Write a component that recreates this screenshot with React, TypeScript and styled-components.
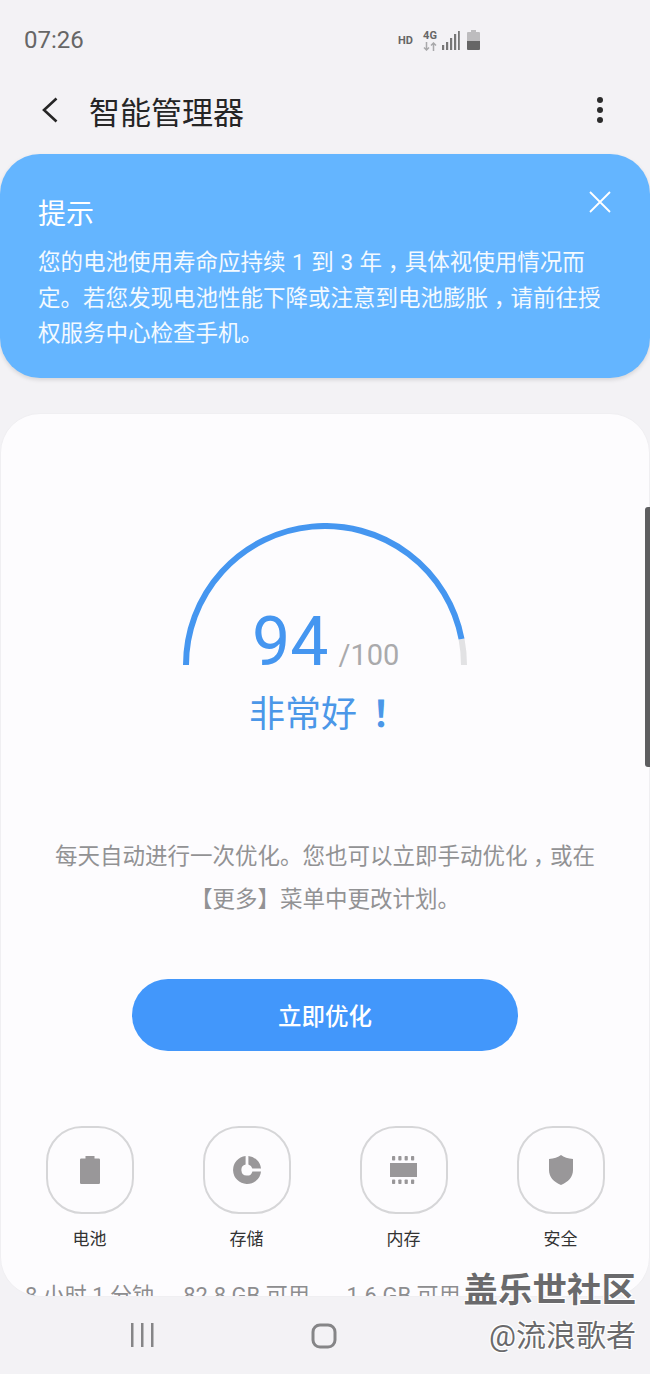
import styled, { createGlobalStyle } from 'styled-components'

const GlobalStyle = createGlobalStyle`
  html, body {
    margin: 0;
    padding: 0;
    background: #f3f2f5;
  }

  body {
    font-family: Roboto, "Noto Sans CJK SC", sans-serif;
  }
`

const tools = [
  { label: '电池', value: '8 小时 1 分钟', icon: <BatteryGlyph /> },
  { label: '存储', value: '82.8 GB 可用', icon: <StorageGlyph /> },
  { label: '内存', value: '1.6 GB 可用', icon: <ChipGlyph /> },
  { label: '安全', value: '', icon: <ShieldGlyph /> },
]

function BatteryGlyph() {
  return (
    <svg width="20" height="28" viewBox="0 0 20 28" fill="#999799">
      <path d="M5.500 0h9v2.500h4.300a1.200 1.200 0 0 1 1.200 1.200v23.100a1.200 1.200 0 0 1-1.200 1.200H1.200a1.200 1.200 0 0 1-1.200-1.200V3.700a1.200 1.200 0 0 1 1.200-1.200h4.300z" />
    </svg>
  )
}

function StorageGlyph() {
  return (
    <svg width="28" height="28" viewBox="0 0 30 30" fill="#999799">
      <path d="M13.500 0v9.200a6 6 0 1 0 7.300 7.300H30A15 15 0 1 1 13.500 0z" />
      <path d="M16.500 0A15 15 0 0 1 30 13.500h-9.300a6 6 0 0 0-4.200-4.300z" />
    </svg>
  )
}

function ChipGlyph() {
  return (
    <svg width="27" height="28" viewBox="0 0 27 28" fill="#999799">
      <rect x="0" y="7" width="27" height="14" />
      {[2, 8.300, 14.600, 21].map((x) => (
        <g key={x}>
          <rect x={x} y="0" width="3.200" height="4.500" rx="0.800" />
          <rect x={x} y="23.500" width="3.200" height="4.500" rx="0.800" />
        </g>
      ))}
    </svg>
  )
}

function ShieldGlyph() {
  return (
    <svg width="24" height="30" viewBox="0 0 25 31" fill="#999799">
      <path d="M12.500 0c2.800 2.300 7.400 3.700 12.500 4v11.500c0 7-4.800 12.500-12.500 15.500C4.800 28 0 22.500 0 15.500V4C5.100 3.700 9.700 2.300 12.500 0z" />
    </svg>
  )
}

export default function App() {
  const r = 139
  const cx = 142
  const cy = 142
  const end = Math.PI * 0.94
  const splitX = cx - r * Math.cos(end)
  const splitY = cy - r * Math.sin(end)

  return (
    <Page>
      <GlobalStyle />
      <StatusBar>
        <Clock>07:26</Clock>
        <StatusIcons>
          <HdMark>HD</HdMark>
          <NetworkMark>
            <span>4G</span>
            <svg width="14" height="9" viewBox="0 0 14 9" fill="none" stroke="#a9a9ab" strokeWidth="1.500">
              <path d="M3.500 0v8M1 5.500l2.500 2.500L6 5.500" />
              <path d="M10.500 9V1M8 3.500L10.500 1 13 3.500" />
            </svg>
          </NetworkMark>
          <svg width="18" height="20" viewBox="0 0 18 20" fill="#777">
            <rect x="0" y="15" width="2.200" height="5" />
            <rect x="4" y="12" width="2.200" height="8" />
            <rect x="8" y="8" width="2.200" height="12" />
            <rect x="12" y="4" width="2.200" height="16" />
            <rect x="16" y="1" width="1.800" height="19" />
          </svg>
          <svg width="13" height="20" viewBox="0 0 13 20">
            <path d="M4 0h5v2h3a1 1 0 0 1 1 1v8H0V3a1 1 0 0 1 1-1h3z" fill="#bdbcbe" />
            <path d="M0 11h13v8a1 1 0 0 1-1 1H1a1 1 0 0 1-1-1z" fill="#666" />
          </svg>
        </StatusIcons>
      </StatusBar>

      <Toolbar>
        <BackButton>
          <svg width="18" height="26" viewBox="0 0 18 26" fill="none" stroke="#252525" strokeWidth="2.600">
            <path d="M15.500 1.500L3 13l12.500 11.500" />
          </svg>
        </BackButton>
        <PageTitle>智能管理器</PageTitle>
        <MoreButton>
          <Dot />
          <Dot />
          <Dot />
        </MoreButton>
      </Toolbar>

      <Notice>
        <NoticeClose>
          <svg width="22" height="22" viewBox="0 0 22 22" fill="none" stroke="#fff" strokeWidth="1.800">
            <path d="M1 1l20 20M21 1L1 21" />
          </svg>
        </NoticeClose>
        <NoticeTitle>提示</NoticeTitle>
        <NoticeText>
          您的电池使用寿命应持续 1 到 3 年<Mark>，</Mark>具体视使用情况而定。若您发现电池性能下降或注意到电池膨胀<Mark>，</Mark>请前往授权服务中心检查手机。
        </NoticeText>
      </Notice>

      <Card>
        <Gauge>
          <svg width="284" height="142" viewBox="0 0 284 142" fill="none" strokeWidth="6">
            <path d={`M${splitX} ${splitY}A${r} ${r} 0 0 1 ${cx + r} ${cy}`} stroke="#e2e2e4" />
            <path d={`M${cx - r} ${cy}A${r} ${r} 0 0 1 ${splitX} ${splitY}`} stroke="#4596f0" />
          </svg>
          <Score>
            <ScoreValue>94</ScoreValue>
            <ScoreMax>/100</ScoreMax>
          </Score>
        </Gauge>
        <Rating>
          非常好<Mark>！</Mark>
        </Rating>
        <Description>
          每天自动进行一次优化。您也可以立即手动优化<Mark>，</Mark>或在
          <br />
          【更多】菜单中更改计划。
        </Description>
        <OptimizeButton>立即优化</OptimizeButton>
        <ToolGrid>
          {tools.map((tool) => (
            <Tool key={tool.label}>
              <ToolIcon>{tool.icon}</ToolIcon>
              <ToolLabel>{tool.label}</ToolLabel>
              <ToolValue>{tool.value}</ToolValue>
            </Tool>
          ))}
        </ToolGrid>
      </Card>

      <NavBar>
        <svg width="24" height="24" viewBox="0 0 24 24" fill="#858587">
          <rect x="1" y="0" width="2.500" height="24" />
          <rect x="11" y="0" width="2.500" height="24" />
          <rect x="21" y="0" width="2.500" height="24" />
        </svg>
        <svg width="26" height="26" viewBox="0 0 26 26" fill="none" stroke="#858587" strokeWidth="3">
          <rect x="2" y="2" width="22" height="22" rx="7" />
        </svg>
      </NavBar>

      <Scrollbar />
      <Watermark>
        <WatermarkTitle>盖乐世社区</WatermarkTitle>
        <WatermarkUser>@流浪歌者</WatermarkUser>
      </Watermark>
    </Page>
  )
}

const Page = styled.div`
  position: relative;
  width: 650px;
  height: 1374px;
  display: flex;
  flex-direction: column;
  overflow: hidden;
  background: #f3f2f5;
`

const StatusBar = styled.div`
  height: 80px;
  padding: 0 170px 0 24px;
  display: flex;
  align-items: center;
  justify-content: space-between;
  box-sizing: border-box;
`

const Clock = styled.span`
  font-size: 24px;
  color: #666;
`

const StatusIcons = styled.div`
  display: flex;
  align-items: center;
  gap: 7px;
  height: 22px;
`

const HdMark = styled.span`
  font-size: 11px;
  font-weight: 700;
  color: #666;
  margin-right: 3px;
`

const NetworkMark = styled.div`
  display: flex;
  flex-direction: column;
  align-items: center;
  gap: 1px;
  margin-right: -2px;

  span {
    font-size: 11px;
    line-height: 11px;
    font-weight: 700;
    color: #666;
  }

  svg {
    display: block;
  }
`

const Toolbar = styled.div`
  height: 60px;
  display: flex;
  align-items: center;
  padding: 0 47px 0 41px;
`

const BackButton = styled.div`
  display: flex;
  width: 48px;
`

const PageTitle = styled.h1`
  flex: 1;
  margin: 0;
  font-size: 31px;
  font-weight: 400;
  color: #252525;
`

const MoreButton = styled.div`
  display: flex;
  flex-direction: column;
  gap: 4px;
`

const Dot = styled.span`
  width: 6px;
  height: 6px;
  border-radius: 50%;
  background: #2c2c2c;
`

const Notice = styled.section`
  position: relative;
  margin-top: 14px;
  height: 224px;
  box-sizing: border-box;
  padding: 41px 38px 0;
  border-radius: 40px;
  background: #64b5ff;
  box-shadow: 0 2px 4px rgba(0, 0, 0, 0.12);
  color: #fff;
`

const NoticeClose = styled.div`
  position: absolute;
  top: 37px;
  right: 39px;
`

const NoticeTitle = styled.h2`
  margin: 0 0 10px;
  font-size: 28px;
  line-height: 40px;
  font-weight: 400;
`

const NoticeText = styled.p`
  margin: 0;
  font-size: 22.500px;
  line-height: 35.500px;
  word-spacing: 1px;
  color: #f4faff;
`

// half-width glyph padded back out to a full cell, so the mark sits in the middle
const Mark = styled.span`
  font-feature-settings: 'halt';
  padding: 0 0.25em;
`

const Card = styled.main`
  margin-top: 35px;
  flex: 1;
  min-height: 0;
  overflow: hidden;
  box-sizing: border-box;
  padding: 109px 10px 0;
  display: flex;
  flex-direction: column;
  align-items: center;
  border: 1px solid #f0eff2;
  border-radius: 40px;
  background: #fdfcfe;
`

const Gauge = styled.div`
  position: relative;
  width: 284px;
  height: 142px;

  svg {
    display: block;
  }
`

const Score = styled.div`
  position: absolute;
  left: 69px;
  bottom: -18px;
  display: flex;
  align-items: baseline;
  white-space: nowrap;
`

const ScoreValue = styled.span`
  font-size: 68px;
  line-height: 82px;
  color: #4596f0;
`

const ScoreMax = styled.span`
  margin-left: 10px;
  font-size: 29px;
  color: #aaaaac;
`

const Rating = styled.div`
  margin: 26px 8px 0 0;
  font-size: 36px;
  line-height: 48px;
  color: #4b97e8;

  ${Mark} {
    padding: 0 0.08em 0 0.42em;
    font-weight: 700;
  }
`

const Description = styled.p`
  margin: 96px 0 0;
  font-size: 22.500px;
  line-height: 43px;
  text-align: center;
  white-space: nowrap;
  color: #929294;
`

const OptimizeButton = styled.button`
  margin-top: 58px;
  flex: none;
  width: 386px;
  height: 72px;
  border: none;
  border-radius: 36px;
  background: #4297fb;
  color: #fff;
  font-family: inherit;
  font-size: 23.500px;
  font-weight: 500;
`

const ToolGrid = styled.div`
  margin-top: 75px;
  align-self: stretch;
  display: grid;
  grid-template-columns: repeat(4, 157px);
`

const Tool = styled.div`
  display: flex;
  flex-direction: column;
  align-items: center;
`

const ToolIcon = styled.div`
  width: 88px;
  height: 88px;
  box-sizing: border-box;
  display: flex;
  align-items: center;
  justify-content: center;
  border: 2px solid #d6d6d8;
  border-radius: 36px;
`

const ToolLabel = styled.div`
  margin-top: 12px;
  font-size: 17px;
  line-height: 26px;
  color: #333;
`

const ToolValue = styled.div`
  margin-top: 29px;
  font-size: 22px;
  line-height: 30px;
  white-space: nowrap;
  color: #8d8d8f;
`

const NavBar = styled.nav`
  height: 77px;
  flex: none;
  box-sizing: border-box;
  padding: 26px 0 0 130px;
  display: flex;
  align-items: flex-start;
  gap: 157px;
  background: #f3f2f5;
`

const Scrollbar = styled.div`
  position: absolute;
  top: 507px;
  right: 0;
  width: 5px;
  height: 260px;
  border-radius: 3px 0 0 3px;
  background: #5e5e60;
`

const Watermark = styled.div`
  position: absolute;
  right: 14px;
  top: 1268px;
  display: flex;
  flex-direction: column;
  align-items: flex-end;
  gap: 2px;
  color: #6a6a6c;
  text-shadow: 1px 1px 0 #fff, -1px -1px 0 #fff, 1px -1px 0 #fff, -1px 1px 0 #fff;
`

const WatermarkTitle = styled.div`
  font-size: 34.500px;
  line-height: 44px;
  font-weight: 700;
`

const WatermarkUser = styled.div`
  font-size: 30px;
  line-height: 44px;
`
